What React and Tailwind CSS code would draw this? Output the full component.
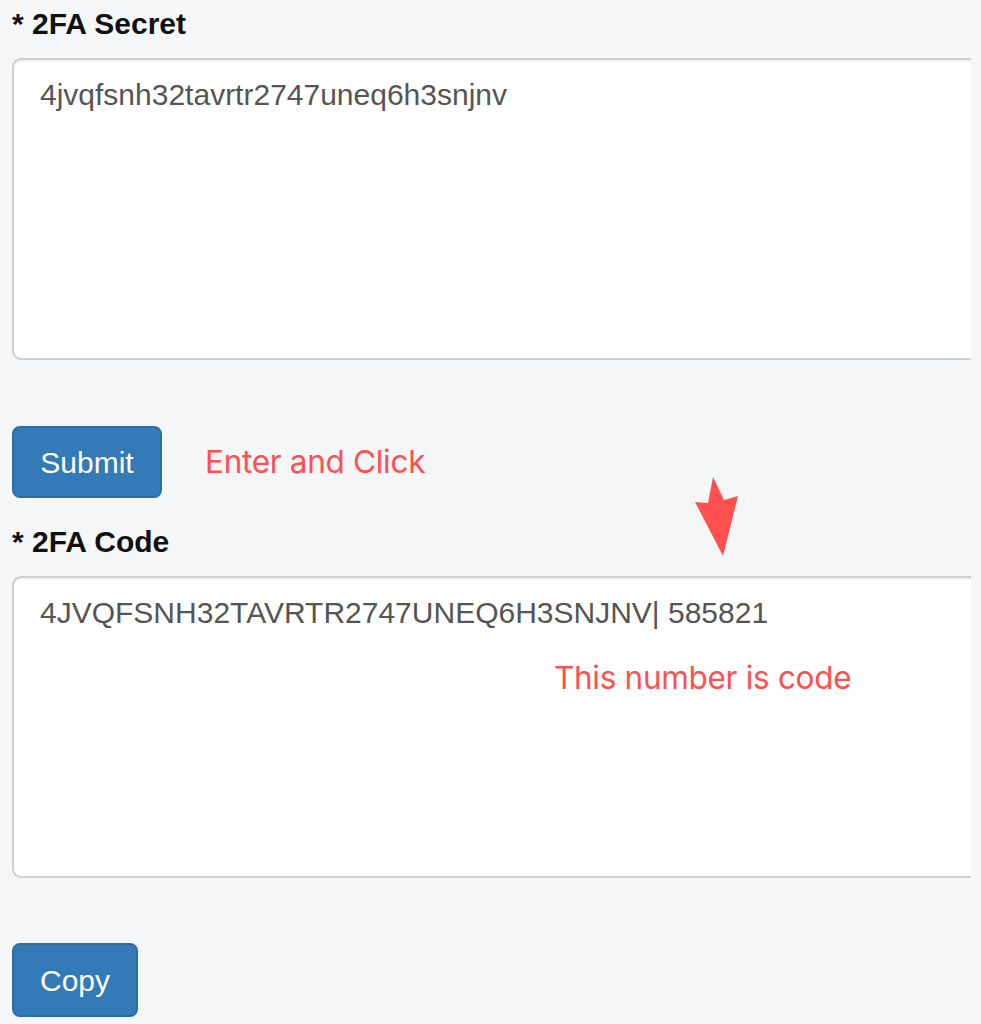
export default function App() {
  const label = "block font-['Liberation_Sans',Arial,sans-serif] font-bold text-[30px] leading-[36px] text-[#111]";
  const box = "relative w-[959px] h-[302px] bg-white border-2 border-r-0 border-[#cfcfcf] rounded-l-[9px] shadow-[inset_0_2px_2px_rgba(0,0,0,0.06)] pl-[26px] pt-[17px] font-['Liberation_Sans',Arial,sans-serif] text-[30px] leading-[36px] text-[#555]";
  const btn = "flex items-center justify-center bg-[#337ab7] border-2 border-[#2e6da4] rounded-[8px] text-white font-['Liberation_Sans',Arial,sans-serif] text-[30px]";
  const red = "font-['Inter',sans-serif] text-[#ff5050] text-[31.5px] leading-[36px] tracking-[-0.3px]";
  return (
    <div className="relative w-[981px] h-[1024px] overflow-hidden bg-[#f5f6f8] pl-[12px] pt-[6px]">
      <label className={label}>* 2FA Secret</label>
      <div className={box + " mt-[16px]"}>4jvqfsnh32tavrtr2747uneq6h3snjnv</div>
      <div className="flex items-center mt-[66px]">
        <button className={btn + " w-[150px] h-[72px]"}>Submit</button>
        <span className={red + " ml-[43px]"}>Enter and Click</span>
      </div>
      <label className={label + " mt-[26px]"}>* 2FA Code</label>
      <div className={box + " mt-[16px]"}>
        4JVQFSNH32TAVRTR2747UNEQ6H3SNJNV| 585821
        <span className={red + " absolute left-[540px] top-[82px]"}>This number is code</span>
      </div>
      <button className={btn + " w-[126px] h-[74px] mt-[65px]"}>Copy</button>
      <svg className="absolute left-[690px] top-[472px]" width="54" height="90" viewBox="690 472 54 90">
        <polygon points="713,477 724,500 738,496 723,556 695,502 708,503" fill="#ff5050" strokeLinejoin="round" />
      </svg>
    </div>
  );
}
